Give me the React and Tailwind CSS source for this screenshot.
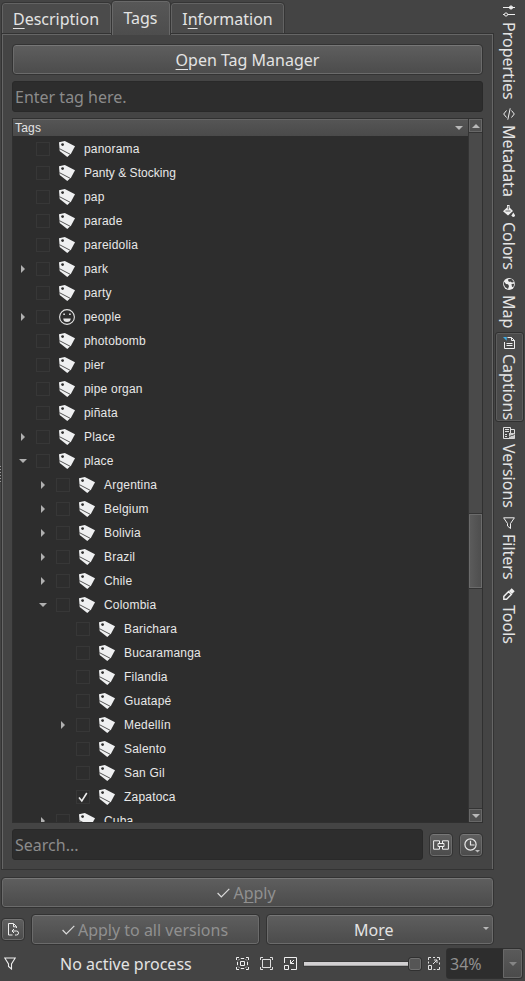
import React from 'react';

const button =
  'flex items-center justify-center rounded-[3px] border border-[#6b6b6b] border-t-[#777] bg-linear-to-b from-[#5e5e5e] to-[#4c4c4c] outline outline-[#333333]';
const field = 'flex items-center rounded-[3px] border border-[#292929] bg-[#2d2d2d] text-[#8b8b8b]';

const rows = [
  ['panorama', 0], ['Panty & Stocking', 0], ['pap', 0], ['parade', 0], ['pareidolia', 0],
  ['park', 0, 'closed'], ['party', 0], ['people', 0, 'closed'], ['photobomb', 0], ['pier', 0],
  ['pipe organ', 0], ['piñata', 0], ['Place', 0, 'closed'], ['place', 0, 'open'],
  ['Argentina', 1, 'closed'], ['Belgium', 1, 'closed'], ['Bolivia', 1, 'closed'],
  ['Brazil', 1, 'closed'], ['Chile', 1, 'closed'], ['Colombia', 1, 'open'],
  ['Barichara', 2], ['Bucaramanga', 2], ['Filandia', 2], ['Guatapé', 2],
  ['Medellín', 2, 'closed'], ['Salento', 2], ['San Gil', 2], ['Zapatoca', 2], ['Cuba', 1, 'closed'],
];
const indents = ['pl-[5px]', 'pl-[25px]', 'pl-[45px]'];

function Mnemonic({ before = '', letter, after }) {
  return (
    <span className="whitespace-pre">
      {before}
      <span className="underline decoration-1 underline-offset-[3px] [text-decoration-skip-ink:none]">{letter}</span>
      {after}
    </span>
  );
}

function Down({ className = 'text-[#b8b8b8]' }) {
  return (
    <svg className={className} width="8" height="4" viewBox="0 0 8 4" fill="currentColor">
      <path d="M0 0h8L4 4z" />
    </svg>
  );
}

function TagIcon() {
  return (
    <svg width="16" height="16" viewBox="0 0 16 16" className="shrink-0">
      <path d="M0 1.3 5.8 0 16 5.2l-3.9 7.4L8.3 16 .7 10z" fill="#eff0f1" />
      <path d="M.5 7.7 11 13.2" stroke="#2d2d2d" strokeWidth=".8" fill="none" />
      <circle cx="3.6" cy="3.6" r="1.4" fill="#2d2d2d" />
    </svg>
  );
}

function SmileIcon() {
  return (
    <svg width="16" height="16" viewBox="0 0 16 16" className="shrink-0" fill="none" stroke="#e4e4e4">
      <circle cx="8" cy="8" r="7.4" strokeWidth="1.1" />
      <path d="M4.3 5.2h1.6M10.1 5.2h1.6" strokeWidth="1.6" />
      <path d="M4.3 9.5h7.4a3.7 3.6 0 0 1-7.4 0z" fill="#e4e4e4" stroke="none" />
    </svg>
  );
}

function Row({ name, depth, state }) {
  return (
    <div className={`flex h-6 shrink-0 items-center ${indents[depth]}`}>
      <span className="flex w-[10px] shrink-0 justify-center text-[#b0b0b0]">
        {state === 'closed' && (
          <svg width="4" height="8" viewBox="0 0 4 8" fill="currentColor"><path d="M0 0v8l4-4z" /></svg>
        )}
        {state === 'open' && <Down className="shrink-0 text-[#b0b0b0]" />}
      </span>
      <span className="mr-[9px] ml-[8px] flex size-[14px] shrink-0 items-center justify-center border border-[#373737]">
        {name === 'Zapatoca' && (
          <svg width="10" height="11" viewBox="0 0 10 11" fill="none" stroke="#eee" strokeWidth="1.6" className="shrink-0">
            <path d="M1 5.6 3.8 9 8.8 1" />
          </svg>
        )}
      </span>
      {name === 'people' ? <SmileIcon /> : <TagIcon />}
      <span className={`ml-[9px] whitespace-pre font-['Liberation_Sans',sans-serif] text-[12px] leading-none text-[#e8e8e8] ${name.includes('&') ? 'tracking-[0.03px]' : 'tracking-[0.2px]'}`}>{name}</span>
    </div>
  );
}

function Check() {
  return (
    <svg width="13" height="10" viewBox="0 0 13 10" fill="none" stroke="#dcdcdc" strokeWidth="1.2"><path d="M.6 5 4.3 8.8 12.3.8" /></svg>
  );
}

const side = [
  ['Properties', 'h-[103px]', <g key="i"><path d="M0 2.5h12M0 9.5h12" /><circle cx="8" cy="2.5" r="1.6" fill="#eee" /><circle cx="3" cy="9.5" r="1.6" fill="#444" /></g>],
  ['Metadata', 'h-[97px]', <path key="i" d="M3.5 2.5.7 6l2.8 3.5M8.5 2.5 11.3 6 8.5 9.5M7.2.3 4.8 11.7" />],
  ['Colors', 'h-[73px]', <g key="i" fill="#eee" stroke="none"><path d="M0 6.3 4 2.6V0h2.6v2.6L10 6l-5 4.6z" /><path d="M5.3 1v3.5M2.5 6h5" stroke="#444" strokeWidth=".8" /><path d="M10.3 7.5 12 10.3a1.6 1.6 0 0 1-3.3 0z" /></g>],
  ['Map', 'h-[59px]', <g key="i" stroke="none"><circle cx="6" cy="6" r="5.9" fill="#eee" /><path d="M1.2 3.8 3 6l2 .3L6 8l-1 3-3-2-1.2-3zM5.5 1l3-.1L11 4 9 4.6 7.2 3.5 6 4 5 2.3zM8.5 6l2.7-.2-.7 3L9 9z" fill="#444" /></g>],
  ['Captions', 'h-[90px]', <g key="i"><path d="M4.5.5h4l3 3v8h-10V5M8.5.5v3h3M3.5 6.5h6M3.5 8.5h6" /><path d="M0 0h3.7v3.7z" fill="#3daee9" stroke="none" /></g>],
  ['Versions', 'h-[90px]', <g key="i"><path d="M.5.5h7v11h-7zM7.5 2.5h4v9h-6M2 2.5h4M2 4.5h4M2 7.5h2M2 9.5h2" stroke="#ddd" /><path d="M6 6h5.5v5.5H6z" fill="#ccc" stroke="none" /><path d="m6.5 10 2-2 1 1 2-2" stroke="#444" /></g>],
  ['Filters', 'h-[71px]', <path key="i" d="M.6.8h10.8L7.5 6.5v5L4.5 9V6.5z" />],
  ['Tools', 'h-[64px]', <g key="i"><path d="M.8 11.2V8.4L5.6 3.6 8.4 6.4 3.6 11.2z" strokeWidth="1.4" /><path d="m6 3 2.7-2.7 3 3L9 6z" fill="#eee" stroke="none" /></g>],
];

export default function App() {
  return (
    <div className="relative flex h-[981px] w-[525px] overflow-hidden bg-[#444444] font-['Noto_Sans',sans-serif] text-[16px] leading-[22px] text-[#e3e3e3]">
      {/* splitter grip overlapping the left edge */}
      <div className="absolute top-[466px] left-0 h-[17px] w-px bg-[repeating-linear-gradient(to_bottom,#999_0px,#999_1px,#3a3a3a_1px,#3a3a3a_3px)]" />
      <main className="flex w-[494px] shrink-0 flex-col pl-[2px]">
        <nav className="flex h-[33px] shrink-0 items-end">
          <div className="flex h-[30px] w-[109px] items-center justify-center rounded-t-[3px] border border-b-0 border-[#636363] bg-[#4b4b4b] pt-px pr-px outline outline-[#353535]">
            <Mnemonic letter="D" after="escription" />
          </div>
          <div className="z-10 -mb-[2px] ml-px flex h-[34px] w-[58px] items-center justify-center rounded-t-[3px] border border-b-0 border-[#686868] bg-linear-to-b from-[#575757] to-[#4d4d4d] pr-px pb-[2px] outline outline-[#353535] [clip-path:inset(-1px_-1px_0_-1px)]">Tags</div>
          <div className="ml-px flex h-[30px] w-[113px] items-center justify-center rounded-t-[3px] border border-b-0 border-[#636363] bg-[#4b4b4b] pt-px outline outline-[#353535]">
            <Mnemonic before="I" letter="n" after="formation" />
          </div>
        </nav>

        <section className="mt-px flex h-[835px] w-[491px] shrink-0 flex-col border-x border-t border-[#666] px-[9px] pt-[10px] outline outline-[#333]">
          <div className={`${button} ml-px h-[29px] w-[469px] shrink-0 pt-px`}><Mnemonic letter="O" after="pen Tag Manager" /></div>
          <div className={`${field} mt-[7px] h-[31px] w-[471px] shrink-0 pl-[2px]`}>Enter tag here.</div>

          <div className="mt-[6px] flex h-[705px] w-[471px] shrink-0 border border-[#303030] bg-[#2d2d2d]">
            <div className="flex w-[455px] flex-col overflow-hidden">
              <div className="mb-px flex h-[17px] shrink-0 items-center justify-between border-t border-[#656565] bg-linear-to-b from-[#555] to-[#4a4a4a] pr-[5px] pl-[2px] font-['Liberation_Sans',sans-serif] text-[12px] leading-none tracking-[0.2px]">
                Tags<Down />
              </div>
              {rows.map(([name, depth, state]) => <Row key={name} name={name} depth={depth} state={state} />)}
            </div>
            <div className="flex w-[14px] flex-col border-l border-[#343434] bg-[#4a4a4a]">
              <div className="flex h-[13px] shrink-0 items-center justify-center border border-[#686868] bg-[#505050]"><Down className="rotate-180 text-[#b8b8b8]" /></div>
              <div className="h-[382px] shrink-0 border-y border-[#343434]" />
              <div className="h-[74px] shrink-0 border border-[#6b6b6b] bg-linear-to-r from-[#5b5b5b] to-[#4e4e4e]" />
              <div className="flex-1 border-y border-[#343434]" />
              <div className="flex h-[13px] shrink-0 items-center justify-center border border-[#686868] bg-[#505050]"><Down /></div>
            </div>
          </div>

          <div className="mt-[6px] flex h-[31px] shrink-0 items-center">
            <div className={`${field} h-[31px] w-[411px] pl-[2px]`}>Search...</div>
            <div className={`${button} ml-[7px] size-[22px]`}>
              <svg width="16" height="10" viewBox="0 0 16 10" className="shrink-0" fill="none" stroke="#eee"><path d="M6.5 3V.8H.6v8.4h5.9V7M9.5 3V.8h5.9v8.4H9.5V7M5 3.5h6v3H5z" /></svg>
            </div>
            <div className={`${button} ml-[8px] size-[22px]`}>
              <svg width="18" height="16" viewBox="0 0 18 16" className="shrink-0" fill="none" stroke="#e8e8e8"><circle cx="8.5" cy="7.5" r="5.6" strokeWidth="1.2" /><path d="M8.5 3.8v4.2h4" strokeWidth="1.2" /><path d="M13 13h5l-2.5 2.5z" fill="#bbb" stroke="none" /></svg>
            </div>
          </div>
        </section>

        <div className={`${button} mt-[9px] h-[29px] w-[491px] shrink-0 gap-[3px] pr-[2px] text-[#909090]`}><Check /><Mnemonic before="A" letter="p" after="ply" /></div>
        <div className="mt-[8px] flex h-[29px] shrink-0 items-center">
          <div className={`${button} h-[21px] w-[22px]`}>
            <svg width="12" height="13" viewBox="0 0 12 13" className="shrink-0" fill="none" stroke="#eee"><path d="M9.5 5V3.5L6.5.5h-5v11.5h4M6.5.8v3h3M5 8h4.5a2 2 0 0 1 0 4H8M7 6 5 8l2 2" /></svg>
          </div>
          <div className={`${button} ml-[8px] h-[29px] w-[227px] gap-[3px] pr-px text-[#909090]`}><Check /><Mnemonic before="App" letter="l" after="y to all versions" /></div>
          <div className={`${button} ml-[8px] h-[29px] w-[226px]`}>
            <span className="flex-1 pl-[86px]"><Mnemonic before="Mo" letter="r" after="e" /></span>
            <svg className="mr-[3px] mb-[3px]" width="6" height="3" viewBox="0 0 6 3" fill="#b8b8b8"><path d="M0 0h6L3 3z" /></svg>
          </div>
        </div>

        <footer className="mt-[4px] flex h-[31px] w-[523px] shrink-0 items-center">
          <svg className="ml-[2px]" width="12" height="13" viewBox="0 0 12 13" fill="none" stroke="#eee" strokeWidth="1.1"><path d="M.8 1h10.4L7.5 7v5L4.5 9.5V7z" /></svg>
          <span className="ml-[44px] w-[176px] whitespace-nowrap">No active process</span>
          <svg width="13" height="13" viewBox="0 0 13 13" fill="none" stroke="#eee"><path d="M.5 3V.5H3M10 .5h2.5V3M12.5 10v2.5H10M3 12.5H.5V10M4.5 4.5h4v4h-4zM4.8 1.5h3.4M4.8 11.5h3.4M1.5 4.8v3.4M11.5 4.8v3.4M2.3 3.3l1-1M9.7 2.3l1 1M10.7 9.7l-1 1M3.3 10.7l-1-1" /></svg>
          <svg className="ml-[11px]" width="13" height="13" viewBox="0 0 13 13" fill="none" stroke="#ddd"><path d="M2.5 2.5h8v8h-8zM.5 3V.5H3M10 .5h2.5V3M12.5 10v2.5H10M3 12.5H.5V10" /></svg>
          <svg className="ml-[11px]" width="13" height="13" viewBox="0 0 13 13" fill="none" stroke="#eee"><path d="M.5 6V.5h12v12H7M.5 8.5h4v4h-4zM10 3 6.5 6.5M6.5 3v3.5H10" /></svg>
          <div className="ml-[7px] flex w-[117px] items-center">
            <div className="h-[4px] w-[105px] border-b border-[#aaa] bg-[#d2d0d2] outline outline-[#3a3a3a]" />
            <div className="size-[12px] rounded-[2px] border border-[#707070] bg-[#555] outline outline-[#303030]" />
          </div>
          <svg className="ml-[7px]" width="12" height="13" viewBox="0 0 12 13" fill="none" stroke="#e2e2e2"><path d="M.5 3V.5H3M9 .5h2.5V3M11.5 10v2.5H9M.5 8.5h3v4h-3zM5 .5h2M.5 4.5v2M11.5 5.5v2M5.5 12.5h2M5 7l4-4M6 3h3v3" /></svg>
          <div className="ml-[6px] flex h-[31px] w-[77px] shrink-0 rounded-[3px] border border-[#303030]">
            <div className="flex w-[56px] items-center bg-[#2d2d2d] pl-[3px] text-[#909090]">34%</div>
            <div className="flex flex-1 items-center justify-center rounded-r-[3px] border border-[#686868] bg-linear-to-b from-[#5a5a5a] to-[#4b4b4b]"><Down className="text-[#858585]" /></div>
          </div>
        </footer>
      </main>

      <aside className="flex h-[647px] w-[31px] shrink-0 flex-col">
        {side.map(([name, height, icon]) => (
          <div
            key={name}
            className={`${height} ml-px flex w-[29px] shrink-0 flex-col items-center pt-[4px] pr-px ${name === 'Captions' ? 'rounded-[3px] border border-[#303030] bg-[#4a4a4a] inset-ring inset-ring-[#5c5c5c]' : 'border border-transparent'}`}
          >
            <svg width="12" height="12" viewBox="0 0 12 12" className="shrink-0" fill="none" stroke="#eee">{icon}</svg>
            <span className="mt-[5px] whitespace-nowrap leading-[22px] [writing-mode:vertical-rl]">{name}</span>
          </div>
        ))}
      </aside>
    </div>
  );
}
